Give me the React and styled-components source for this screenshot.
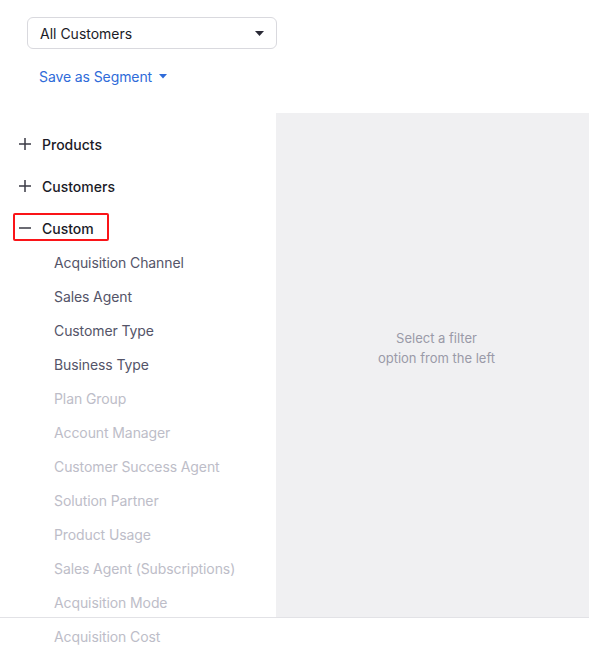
import React from "react";
import styled, { createGlobalStyle } from "styled-components";

const COLOURS = {
    text: "#1b1b27",
    subtle: "#545468",
    disabled: "#bdbdc8",
    link: "#2f6bd9",
    border: "#d9d9de",
    panel: "#f0f0f2",
    hint: "#9a9aa8",
    focus: "#fa1418",
};

const GlobalStyle = createGlobalStyle`
    body {
        margin: 0;
        background: #fff;
        font-family: "Inter", "Liberation Sans", sans-serif;
        -webkit-font-smoothing: antialiased;
    }
`;

const Main = styled.div`
    display: flex;
    flex-flow: column nowrap;
    width: 589px;
    min-height: 100vh;
`;

const Header = styled.div`
    display: flex;
    flex-flow: column nowrap;
    align-items: flex-start;
    padding: 17px 0 0 27px;
    height: 113px;
    box-sizing: border-box;
`;

const Select = styled.button`
    display: flex;
    align-items: center;
    justify-content: space-between;
    width: 250px;
    height: 32px;
    box-sizing: border-box;
    padding: 0 12px 0 12px;
    border: 1px solid ${COLOURS.border};
    border-radius: 6px;
    background: #fff;
    font: inherit;
    font-size: 14px;
    color: ${COLOURS.text};
    cursor: pointer;
`;

const SegmentLink = styled.a`
    display: inline-flex;
    align-items: center;
    gap: 7px;
    margin: 19px 0 0 12px;
    font-size: 14px;
    letter-spacing: -0.1px;
    color: ${COLOURS.link};
    text-decoration: none;
    cursor: pointer;
`;

const Caret = ({ colour, width = 9 }) => (
    <svg width={width} height={width / 2 + 0.5} viewBox="0 0 9 5">
        <path d="M0 0h9L4.5 5z" fill={colour} />
    </svg>
);

const Body = styled.div`
    display: flex;
    flex-flow: row nowrap;
    height: 504px;
    flex: none;
    border-bottom: 1px solid #e2e2e6;
`;

const Sidebar = styled.div`
    width: 276px;
    flex: none;
    padding-top: 16px;
    box-sizing: border-box;
    overflow: visible;
`;

const Group = styled.div`
    display: flex;
    flex-flow: column nowrap;
    align-items: flex-start;
    & + & {
        margin-top: 14px;
    }
`;

const GroupToggle = styled.div`
    display: inline-flex;
    align-items: center;
    gap: 11px;
    height: 28px;
    box-sizing: border-box;
    margin-left: 13px;
    padding: 2px 13px 0 4px;
    border: 2px solid ${({ $focused }) => ($focused ? COLOURS.focus : "transparent")};
    border-radius: 2px;
    font-size: 14px;
    font-weight: 500;
    color: ${COLOURS.text};
    cursor: pointer;
`;

const List = styled.ul`
    list-style-type: none;
    margin: 5px 0 0;
    padding: 0;
    align-self: stretch;
`;

const Option = styled.li`
    height: 34px;
    line-height: 34px;
    padding-left: 54px;
    font-size: 14px;
    letter-spacing: -0.1px;
    white-space: nowrap;
    color: ${({ $disabled }) => ($disabled ? COLOURS.disabled : COLOURS.subtle)};
    cursor: ${({ $disabled }) => ($disabled ? "default" : "pointer")};
`;

const Placeholder = styled.div`
    flex: 1;
    display: flex;
    align-items: center;
    justify-content: center;
    padding: 0 0 34px 8px;
    background: ${COLOURS.panel};
    text-align: center;
    font-size: 13px;
    line-height: 20px;
    color: ${COLOURS.hint};
`;

const ToggleIcon = ({ open }) => (
    <svg width="12" height="12" viewBox="0 0 12 12">
        <path d="M0 6h12" stroke="#3a3a44" strokeWidth="1.5" />
        {!open && <path d="M6 0v12" stroke="#3a3a44" strokeWidth="1.5" />}
    </svg>
);

const groups = [
    { name: "Products", open: false, options: [] },
    { name: "Customers", open: false, options: [] },
    {
        name: "Custom",
        open: true,
        focused: true,
        options: [
            { label: "Acquisition Channel" },
            { label: "Sales Agent" },
            { label: "Customer Type" },
            { label: "Business Type" },
            { label: "Plan Group", disabled: true },
            { label: "Account Manager", disabled: true },
            { label: "Customer Success Agent", disabled: true },
            { label: "Solution Partner", disabled: true },
            { label: "Product Usage", disabled: true },
            { label: "Sales Agent (Subscriptions)", disabled: true },
            { label: "Acquisition Mode", disabled: true },
            { label: "Acquisition Cost", disabled: true },
        ],
    },
];

const App = () => (
    <Main>
        <GlobalStyle />
        <Header>
            <Select>
                All Customers
                <Caret colour="#2a2a36" />
            </Select>
            <SegmentLink>
                Save as Segment
                <Caret colour={COLOURS.link} width={8} />
            </SegmentLink>
        </Header>
        <Body>
            <Sidebar>
                {groups.map(group => (
                    <Group key={group.name}>
                        <GroupToggle $focused={group.focused}>
                            <ToggleIcon open={group.open} />
                            {group.name}
                        </GroupToggle>
                        {group.open && (
                            <List>
                                {group.options.map(option => (
                                    <Option key={option.label} $disabled={option.disabled}>
                                        {option.label}
                                    </Option>
                                ))}
                            </List>
                        )}
                    </Group>
                ))}
            </Sidebar>
            <Placeholder>
                Select a filter
                <br />
                option from the left
            </Placeholder>
        </Body>
    </Main>
);

export default App;
